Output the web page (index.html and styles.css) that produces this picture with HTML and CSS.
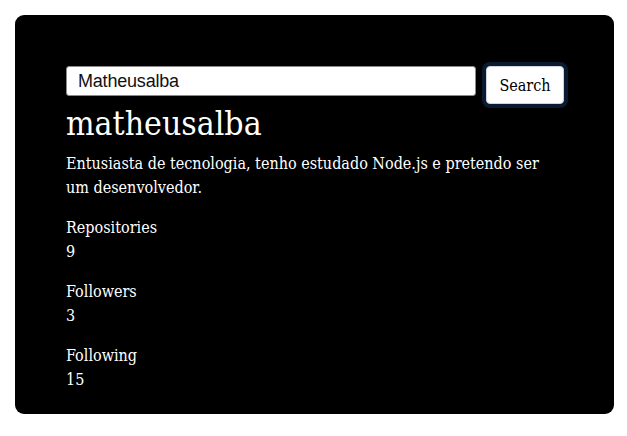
FILE: index.html
```html
<!DOCTYPE html>
<html lang="pt">
<head>
<meta charset="utf-8">
<title>GitHub profile</title>
<link rel="stylesheet" href="styles.css">
</head>
<body>
<main class="card">
  <form class="search">
    <input class="search-input" type="text" value="Matheusalba">
    <button class="search-button" type="button">Search</button>
  </form>
  <h1 class="name">matheusalba</h1>
  <p class="bio">Entusiasta de tecnologia, tenho estudado Node.js e pretendo ser um desenvolvedor.</p>
  <div class="stat">
    <div>Repositories</div>
    <div>9</div>
  </div>
  <div class="stat">
    <div>Followers</div>
    <div>3</div>
  </div>
  <div class="stat">
    <div>Following</div>
    <div>15</div>
  </div>
</main>
</body>
</html>
```

FILE: styles.css
```css
body {
  margin: 15px 0 0 15px;
  background: #fff;
  font-family: "Roboto Slab", "DejaVu Serif", serif;
  font-stretch: condensed;
}

.card {
  box-sizing: border-box;
  width: 599px;
  height: 399px;
  padding: 51px 50px 0 51px;
  background: #000;
  color: #fff;
  border-radius: 9px;
  font-size: 16px;
  line-height: 24px;
}

.search {
  display: flex;
  align-items: flex-start;
  gap: 10px;
}

.search-input {
  flex: 1;
  box-sizing: border-box;
  height: 30px;
  margin: 0;
  padding: 0 11px;
  border: 1px solid #8a8a8a;
  border-radius: 3px;
  background: #fff;
  color: #111;
  font-family: "Liberation Sans", Arial, sans-serif;
  font-size: 18px;
  letter-spacing: -0.2px;
}

.search-button {
  box-sizing: border-box;
  width: 78px;
  height: 38px;
  margin: 0;
  padding: 0;
  border: 1px solid #d0d4da;
  border-radius: 4px;
  background: #fff;
  color: #000;
  font-family: inherit;
  font-stretch: condensed;
  font-size: 16px;
  box-shadow: 0 0 0 4px #0a1a31;
}

.name {
  margin: 0;
  font-size: 33.5px;
  font-weight: 400;
  line-height: 40px;
}

.bio {
  margin: 8px 0 16px;
}

.stat {
  margin-bottom: 16px;
}
```
